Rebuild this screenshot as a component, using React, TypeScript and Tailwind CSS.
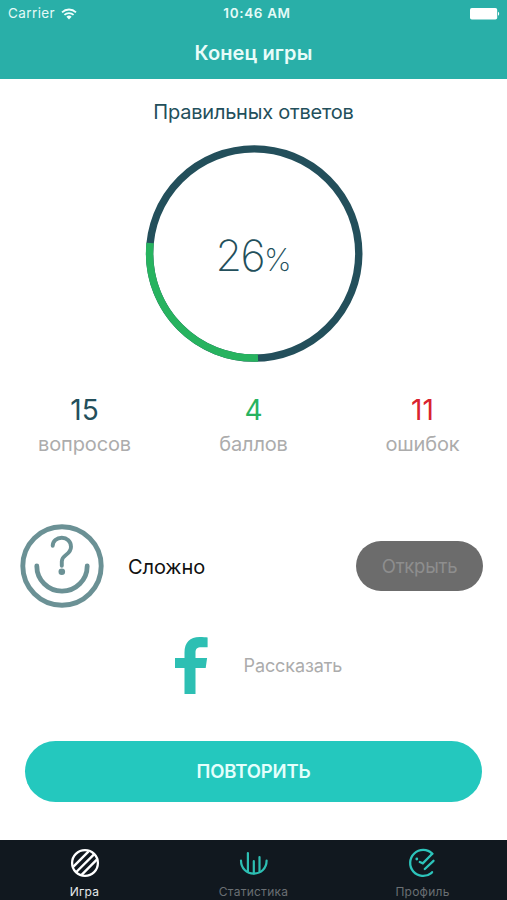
import React from "react";
import { clsx } from "clsx";

const stats = [
  { label: "вопросов", value: 15, color: "text-[#234f5b]" },
  { label: "баллов", value: 4, color: "text-[#27b35f]" },
  { label: "ошибок", value: 11, color: "text-[#d9232f]" },
];

function WifiIcon() {
  return (
    <svg width="16" height="12" viewBox="0 0 16 12" fill="none" stroke="#f0fffd" strokeWidth="1.8">
      <path d="M1 4.3a10.2 10.2 0 0 1 14 0" />
      <path d="M3.4 6.9a6.7 6.7 0 0 1 9.2 0" />
      <path d="M8 11.4 5.4 8.8a3.8 3.8 0 0 1 5.2 0z" fill="#f0fffd" stroke="none" />
    </svg>
  );
}

function BatteryIcon() {
  return (
    <svg width="30" height="12" viewBox="0 0 30 12" fill="#fff">
      <rect x="0" y="0" width="27.2" height="11.6" rx="1.8" />
      <path d="M28 3.8c1.6.5 1.6 3.5 0 4z" />
    </svg>
  );
}

function StatusBar() {
  return (
    <div className="flex h-[27px] items-center justify-between pl-2 pr-[7px] text-[13px] text-[#e4faf7]">
      <div className="flex w-40 items-center gap-[6px]">
        <span className="text-[13.5px] tracking-[0.4px]">Carrier</span>
        <WifiIcon />
      </div>
      <span className="pl-[6px] text-[13.5px] font-semibold tracking-[0.65px]">10:46 AM</span>
      <div className="flex w-40 justify-end">
        <BatteryIcon />
      </div>
    </div>
  );
}

function ScoreRing() {
  return (
    <div className="relative mx-auto h-[218px] w-[218px]">
      <svg width="218" height="218" viewBox="0 0 218 218" fill="none" strokeWidth="7.4">
        <circle cx="109.2" cy="108.5" r="104.6" stroke="#234f5b" />
        <path d="M113 213A104.6 104.6 0 0 1 5.1 98" stroke="#27b35f" />
      </svg>
      <div className="absolute inset-0 flex items-baseline justify-center pt-[89px] font-extralight leading-none text-[#234f5b]">
        <span className="text-[43px] tracking-[-1.6px]">26</span>
        <span className="text-[31px]">%</span>
      </div>
    </div>
  );
}

function HardIcon() {
  return (
    <svg width="84" height="84" viewBox="0 0 84 84" fill="none" stroke="#6b9195" strokeLinecap="round">
      <circle cx="42" cy="42" r="39.2" strokeWidth="4.9" />
      <path d="M16.8 42a25.2 25.2 0 0 0 50.4 0" strokeWidth="4.8" />
      <path d="M32.7 21.8c0-4.8 4-8 9.1-8s9.2 3.5 9.2 9c0 8.8-9.2 7-9.2 14.7v4.2" strokeWidth="3.9" />
      <circle cx="41.8" cy="47.8" r="3.3" fill="#6b9195" stroke="none" />
    </svg>
  );
}

function FacebookIcon() {
  return (
    <svg width="33" height="57" viewBox="0 0 33 57" fill="#2dbfb3">
      <path d="M9.5 57V31H0v-10h9.5v-5.5C9.5 5.5 15 0 24.5 0 28 0 31 .2 32.6.6v9.7h-6.2c-4.4 0-5.9 1.7-5.9 5.2V21h11.6l-1.4 10H20.5v26z" />
    </svg>
  );
}

function GameIcon() {
  return (
    <svg width="30" height="30" viewBox="0 0 30 30" fill="none" stroke="#fff" strokeWidth="2.3">
      <circle cx="15" cy="15" r="12.9" />
      <path d="M3.4 18.6 18.6 3.4M6.3 24 24 6.3M11.6 26.8 26.8 11.6" strokeWidth="2.4" />
    </svg>
  );
}

function StatsIcon() {
  return (
    <svg width="30" height="30" viewBox="0 0 30 30" fill="none" stroke="#2dbfb3" strokeWidth="2.2" strokeLinecap="round">
      <path d="M2 12.5C2 20.5 7.7 25.6 14.8 25.6S27.6 20.5 27.6 12.5" />
      <path d="M8.9 5v18.8M14.8 13.2v12.2M20.5 9v14.6" />
    </svg>
  );
}

function ProfileIcon() {
  return (
    <svg width="30" height="30" viewBox="0 0 30 30" fill="none" stroke="#2dc4bb" strokeWidth="2.3" strokeLinecap="round">
      <path d="M24.3 5.7a13 13 0 1 0-1 19.4l.8-1" />
      <path d="m24.3 5.7-9.5 9.7-3-1.4M25.5 12.8 16.8 21" />
      <circle cx="8.8" cy="11" r="1.4" fill="#2dc4bb" stroke="none" />
    </svg>
  );
}

const tabs = [
  { label: "Игра", icon: <GameIcon />, active: true },
  { label: "Статистика", icon: <StatsIcon />, active: false },
  { label: "Профиль", icon: <ProfileIcon />, active: false },
];

export default function App() {
  return (
    <div className="flex h-[900px] w-[507px] flex-col overflow-hidden bg-white font-['Inter','Liberation_Sans',sans-serif]">
      <header className="h-[79px] shrink-0 bg-[#29afa8]">
        <StatusBar />
        <h1 className="text-center text-[20px] font-semibold leading-[52px] tracking-[0.1px] text-[#e8fcf9]">Конец игры</h1>
      </header>

      <main className="flex flex-1 flex-col">
        <h2 className="h-[66px] text-center text-[20px] leading-[66px] tracking-[-0.22px] text-[#234f5b]">Правильных ответов</h2>
        <ScoreRing />

        <div className="mt-[29px] grid h-[70px] grid-cols-3">
          {stats.map((stat) => (
            <div key={stat.label} className="text-center">
              <div className={clsx("text-[28px] leading-[36px]", stat.color)}>{stat.value}</div>
              <div className="text-[20px] leading-[32px] tracking-[-0.15px] text-[#acacac]">{stat.label}</div>
            </div>
          ))}
        </div>

        <div className="mt-[62px] flex items-center pl-5 pr-[24px]">
          <HardIcon />
          <span className="ml-6 flex-1 pt-[2px] text-[20px] tracking-[-0.1px] text-[#111]">Сложно</span>
          <button className="h-[50px] w-[127px] rounded-full bg-[#6c6c6c] pt-px text-[18.5px] tracking-[-0.25px] text-[#8e8e8e]">
            Открыть
          </button>
        </div>

        <div className="mt-[29px] flex h-[57px] items-center pl-[175px]">
          <FacebookIcon />
          <span className="ml-[35.5px] text-[18px] tracking-[-0.1px] text-[#acacac]">Рассказать</span>
        </div>

        <button className="mx-[25px] mt-[47px] h-[61px] rounded-full bg-[#24c8be] pt-px text-[18.5px] font-semibold tracking-[-0.15px] text-[#e4fffc]">
          ПОВТОРИТЬ
        </button>
      </main>

      <nav className="grid h-[60px] shrink-0 grid-cols-3 bg-[#11181f]">
        {tabs.map((tab) => (
          <div key={tab.label} className="flex flex-col items-center pt-2">
            {tab.icon}
            <span
              className={clsx(
                "mt-[5px] text-[12px] leading-[17px] tracking-[0.25px]",
                tab.active ? "text-[#e6e8ea]" : "text-[#6a6f73]"
              )}
            >
              {tab.label}
            </span>
          </div>
        ))}
      </nav>
    </div>
  );
}
